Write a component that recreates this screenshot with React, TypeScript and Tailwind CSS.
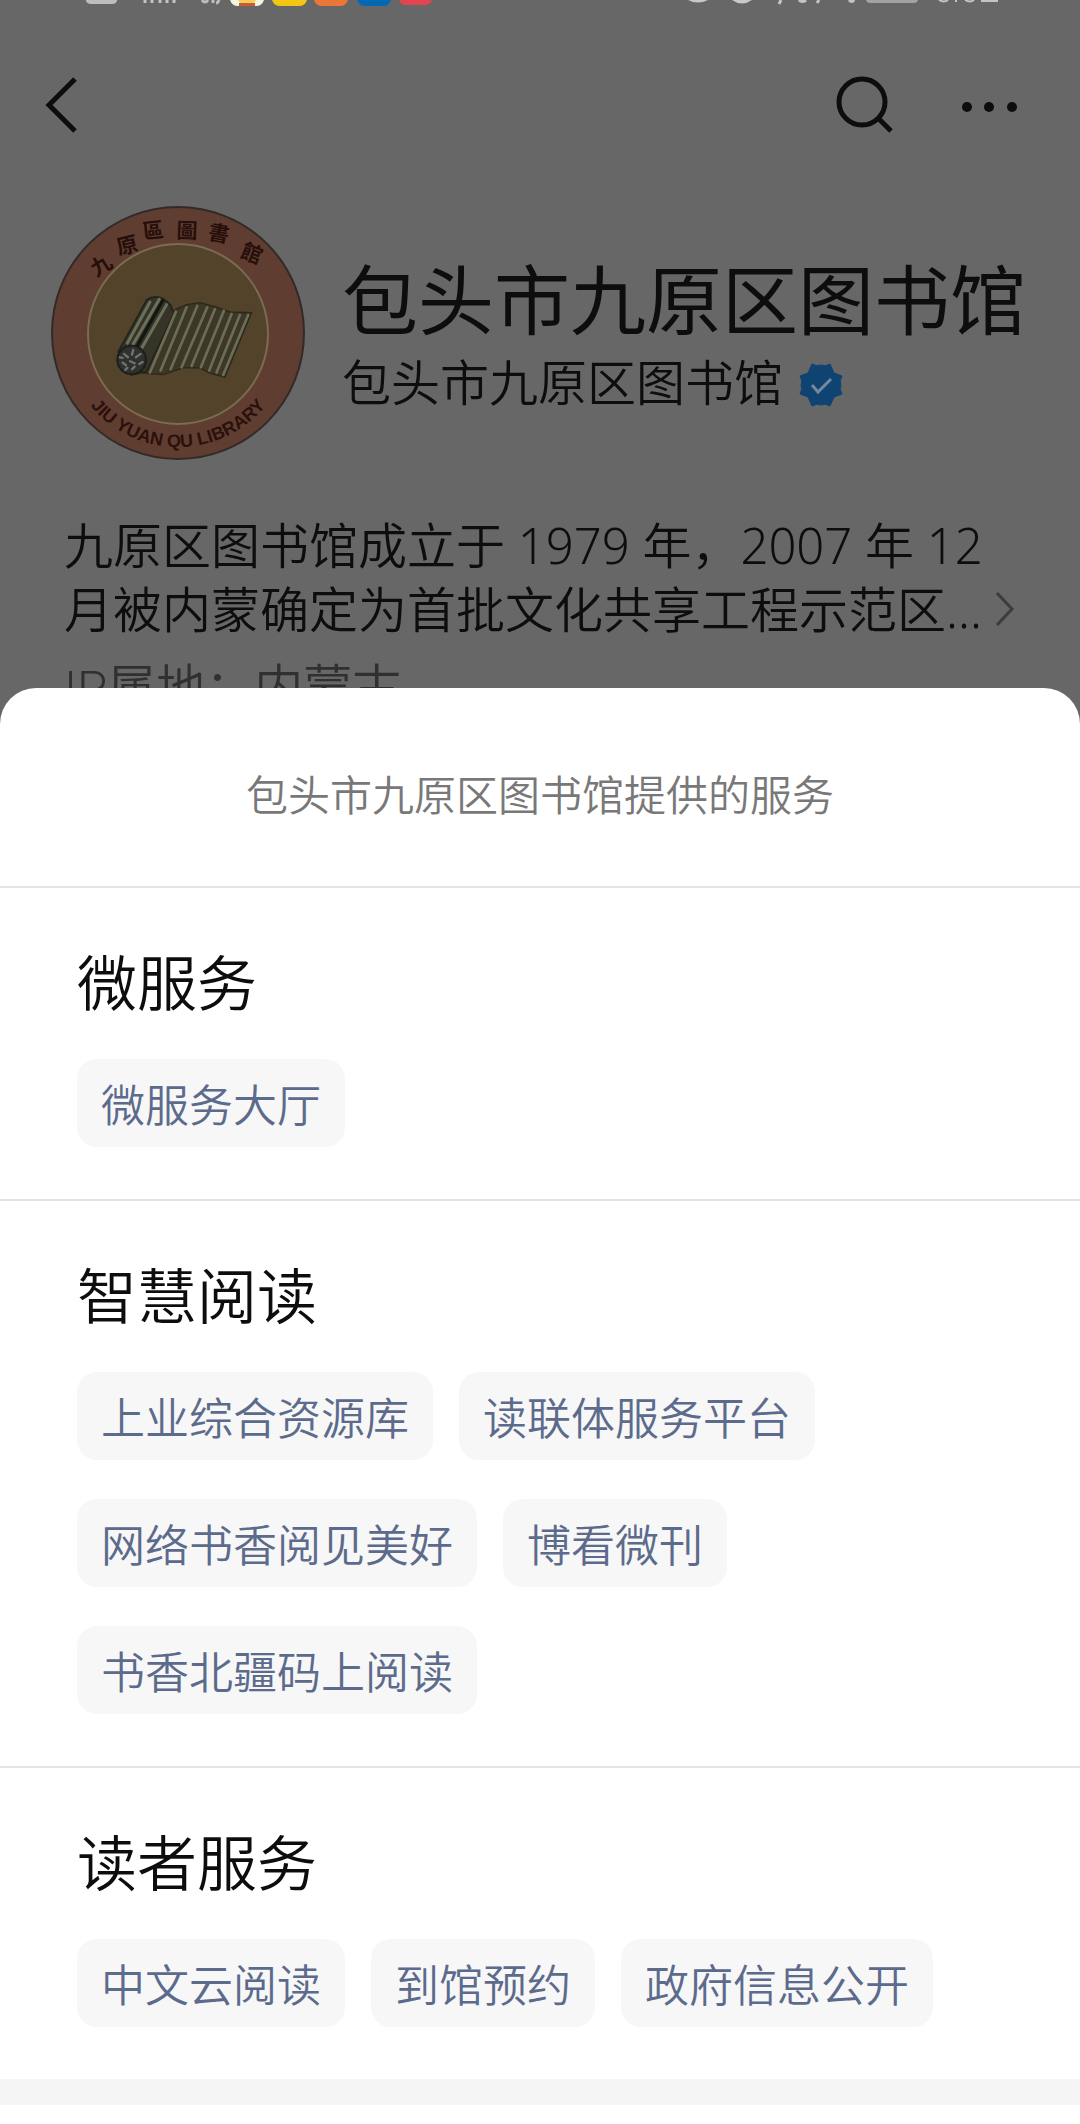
const sections = [
  { title: '微服务', items: ['微服务大厅'] },
  {
    title: '智慧阅读',
    items: ['上业综合资源库', '读联体服务平台', '网络书香阅见美好', '博看微刊', '书香北疆码上阅读'],
  },
  { title: '读者服务', items: ['中文云阅读', '到馆预约', '政府信息公开'] },
];

const sealChars = [
  { c: '九', x: 51, y: 60, r: -32 },
  { c: '原', x: 77, y: 40, r: -14 },
  { c: '區', x: 103, y: 25, r: -6 },
  { c: '圖', x: 137, y: 25, r: 2 },
  { c: '書', x: 169, y: 28, r: 10 },
  { c: '館', x: 202, y: 48, r: 22 },
];

const rods = [
  'M228 95L150 278',
  'M260 82L182 272',
  'M292 78L212 268',
  'M322 82L245 262',
  'M345 88L275 258',
  'M372 92L303 262',
  'M395 102L328 272',
  'M420 105L350 278',
  'M445 105L370 285',
];

function StatusBar() {
  return (
    <div className="h-5 overflow-hidden" aria-hidden="true">
      <svg className="block h-5 w-full" viewBox="0 0 1080 20" preserveAspectRatio="xMidYMin slice">
        <path d="M86 0H117V1Q116 4 112 4H91Q87 4 86 1Z" fill="#bdbdbd" />
        <path d="M145 0v3M152 0v3M160 0v3M167 0v3M174 0v3" stroke="#c4c4c4" strokeWidth="3" />
        <path d="M202 0q3 4 6 0M213 0v3M219 0q-1 3-3 3" stroke="#bdbdbd" strokeWidth="3" fill="none" />
        <path d="M230 0H264Q262 6 256 6H238Q232 6 230 0Z" fill="#f6f3df" />
        <path d="M238 0H256L253 4H241Z" fill="#f5cd5b" />
        <path d="M239 3H255V6H239Z" fill="#c95a35" />
        <path d="M272 0H307Q305 6 299 6H280Q274 6 272 0Z" fill="#f2c614" />
        <path d="M314 0H348Q346 6 340 6H322Q316 6 314 0Z" fill="#ec7636" />
        <path d="M357 0H391Q389 6 383 6H365Q359 6 357 0Z" fill="#0568b3" />
        <path d="M399 0H432Q430 5 425 5H406Q401 5 399 0Z" fill="#e24450" />
        <path d="M688 0Q698 5 708 0ZM732 0Q742 7 752 0Z" fill="#c8c8c8" />
        <path d="M781 0L779 4M799 0q3 3 7 0M819 0l-2 3M849 0q3 3 5 0" stroke="#c4c4c4" strokeWidth="3" fill="none" />
        <path d="M866 0H918Q917 3 914 3H870Q867 3 866 0Z" fill="#a2a2a2" />
        <path d="M939 0q5 3 9 0M956 0v2M965 0q5 3 9 0M981 1h17" stroke="#c4c4c4" strokeWidth="2" fill="none" />
      </svg>
    </div>
  );
}

function LibrarySeal() {
  return (
    <svg className="size-64 shrink-0" viewBox="0 0 256 256" role="img" aria-label="九原区图书馆">
      <defs>
        <path id="seal-arc" d="M14 128A114 114 0 0 0 242 128" />
      </defs>
      <circle cx="128" cy="128" r="126" fill="#5f3e31" stroke="#332a27" strokeWidth="2" />
      <circle cx="128" cy="129" r="90" fill="#52432a" stroke="#7a6b52" strokeWidth="2" />
      <g fill="#260f0b" fontSize="21" fontWeight="700" fontFamily="'Noto Sans CJK TC', sans-serif" textAnchor="middle">
        {sealChars.map((s) => (
          <text key={s.c} x={s.x} y={s.y + 8} transform={`rotate(${s.r} ${s.x} ${s.y})`}>
            {s.c}
          </text>
        ))}
      </g>
      <text fill="#2c100c" fontSize="18" fontWeight="700" fontFamily="'Liberation Sans', sans-serif" textAnchor="middle">
        <textPath href="#seal-arc" startOffset="50%">
          JIU YUAN QU LIBRARY
        </textPath>
      </text>
      <g transform="translate(50 75) scale(.333)" fill="none" strokeLinecap="round">
        <path
          d="M130 280L228 88L260 74L300 68L345 80L390 96L455 98L375 292L330 280L300 264L250 264L190 284Z"
          fill="#3d3725"
          stroke="#2a281c"
          strokeWidth="4"
        />
        <path d="M55 215L140 60Q175 35 212 75L222 100L140 275L95 285Z" fill="#363427" stroke="#22231a" strokeWidth="5" />
        {rods.map((d) => (
          <path key={d} d={d} stroke="#6b6d58" strokeWidth="8" />
        ))}
        <path d="M178 58L98 195M200 74L125 205M150 66L82 190" stroke="#6a705c" strokeWidth="9" />
        <path d="M188 62L112 198" stroke="#12160f" strokeWidth="9" />
        <circle cx="95" cy="240" r="43" fill="#30312d" stroke="#1b1d1b" strokeWidth="6" strokeDasharray="10 6" />
        <path
          d="M72 222l12 10M100 210l-4 14M122 222l-14 10M90 244l14 6M68 248l10 8M118 252l10-6M96 268l8-8M76 270l6-6M60 232l8 2"
          stroke="#6f7473"
          strokeWidth="7"
        />
      </g>
    </svg>
  );
}

function VerifiedBadge() {
  return (
    <svg className="size-11" viewBox="0 0 44 44" role="img" aria-label="已认证">
      <path
        d="M13 1Q18 4 22 2Q26 4 31 1L35 10L43 13Q40 18 42 22Q40 26 43 31L35 34L31 43Q26 40 22 42Q18 40 13 43L9 34L1 31Q4 26 2 22Q4 18 1 13L9 10Z"
        fill="#0f4372"
        stroke="#0f4372"
        strokeLinejoin="round"
      />
      <path d="M13 22L19 29L32 16" fill="none" stroke="#7289a0" strokeWidth="3" />
    </svg>
  );
}

export default function App() {
  return (
    <div className="min-h-screen bg-[#676767] font-['Roboto','Noto_Sans_CJK_SC',sans-serif] text-[#0d0d0d]">
      <StatusBar />
      <nav className="mt-[53px] flex h-16 items-center justify-between pr-14 pl-10">
        <button type="button" aria-label="返回">
          <svg className="h-16 w-11" viewBox="0 0 44 64" fill="none" stroke="currentColor" strokeWidth="5">
            <path d="M35 6L9 32L35 58" />
          </svg>
        </button>
        <div className="flex gap-16">
          <button type="button" aria-label="搜索">
            <svg className="size-16" viewBox="0 0 64 64" fill="none" stroke="currentColor" strokeWidth="5">
              <circle cx="30" cy="29" r="23" />
              <path d="M47 46L59 58" />
            </svg>
          </button>
          <button type="button" aria-label="更多">
            <svg className="h-16 w-16" viewBox="0 0 64 64" fill="currentColor">
              <circle cx="7" cy="34" r="5" />
              <circle cx="29" cy="34" r="5" />
              <circle cx="52" cy="34" r="5" />
            </svg>
          </button>
        </div>
      </nav>

      <header className="mt-[68px] flex items-center gap-9 pl-[50px]">
        <LibrarySeal />
        <div className="pt-3 whitespace-nowrap">
          <h1 className="text-[76px] leading-[92px]">包头市九原区图书馆</h1>
          <p className="flex items-center gap-4 text-[49px] leading-[72px] font-[350]">
            包头市九原区图书馆
            <VerifiedBadge />
          </p>
        </div>
      </header>

      <div className="mt-[52px] px-16 text-[49px] leading-[64px] font-[350]">
        <div className="flex items-end">
          <p className="w-[930px] font-['Noto_Sans','Noto_Sans_CJK_SC',sans-serif]">
            九原区图书馆成立于 1979 年，2007 年 12 月被内蒙确定为首批文化共享工程示范区...
          </p>
          <svg className="mb-3 h-10 w-6 shrink-0" viewBox="0 0 24 40" fill="none" stroke="#3c3c3c" strokeWidth="3">
            <path d="M5 4L20 20L5 36" />
          </svg>
        </div>
        <p className="mt-4 text-[#303030]">IP属地：内蒙古</p>
      </div>

      <main className="relative -mt-[33px] rounded-t-[36px] bg-white">
        <h2 className="border-b-2 border-[#e3e3e3] pt-[77px] pb-[57px] text-center text-[42px] leading-[64px] font-[350] text-[#787878]">
          包头市九原区图书馆提供的服务
        </h2>
        {sections.map((s) => (
          <section
            key={s.title}
            className="border-b-2 border-[#e3e3e3] px-[77px] pt-[63px] pb-[52px] last-of-type:border-b-0"
          >
            <h3 className="mb-[38px] text-[60px] leading-[70px] font-[350]">{s.title}</h3>
            <div className="flex flex-wrap gap-x-[26px] gap-y-[39px]">
              {s.items.map((item) => (
                <button
                  key={item}
                  type="button"
                  className="h-[88px] rounded-[20px] bg-[#f7f7f7] px-6 pt-2 text-[44px] leading-[64px] font-[350] text-[#5c6b8c]"
                >
                  {item}
                </button>
              ))}
            </div>
          </section>
        ))}
        <div className="h-[26px] bg-[#f5f5f5]" />
        <div className="h-5" />
      </main>
    </div>
  );
}
